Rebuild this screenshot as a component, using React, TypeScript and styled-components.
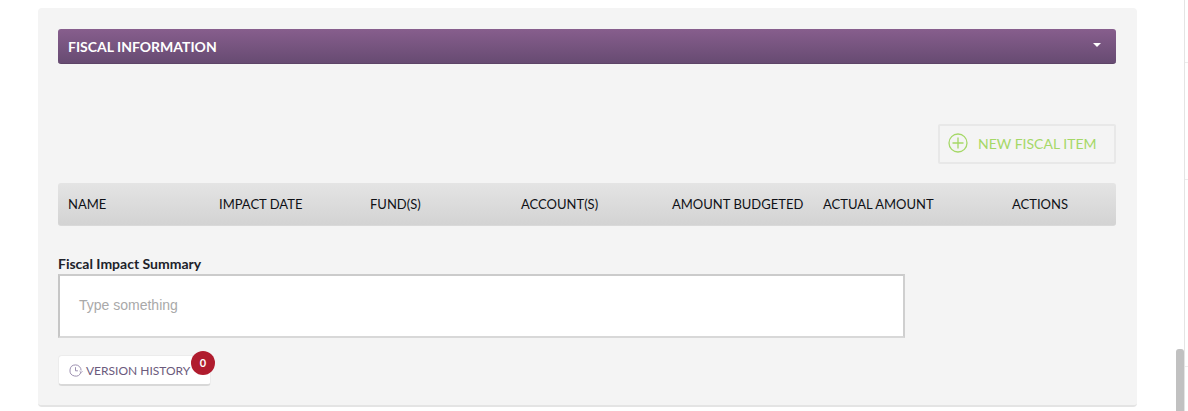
import { createGlobalStyle } from 'styled-components';
import styled from 'styled-components';

const GlobalStyle = createGlobalStyle`
  html, body {
    margin: 0;
    padding: 0;
    background: #ffffff;
    overflow: hidden;
  }
  body {
    font-family: Lato, "Liberation Sans", sans-serif;
  }
`;

const Page = styled.div`
  display: flex;
  width: 1188px;
  height: 411px;
  overflow: hidden;
`;

const Main = styled.main`
  width: 1176px;
  box-sizing: border-box;
  padding: 8px 39px 0 38px;
`;

const ScrollTrack = styled.div`
  width: 8px;
  height: 411px;
  padding-top: 349px;
  box-sizing: border-box;
  background: #ffffff;
`;

const ScrollThumb = styled.div`
  height: 62px;
  background: #c1c1c1;
  border-radius: 3px 3px 0 0;
`;

const SideSliver = styled.aside`
  width: 4px;
  height: 411px;
  box-sizing: border-box;
  border-left: 1px solid #e4e4e4;
  display: flex;
  flex-direction: column;
`;

const SideRow = styled.div<{ $height: number }>`
  height: ${(p) => p.$height}px;
  flex: none;
  box-sizing: border-box;
  border-bottom: 1px solid #ececec;
`;

const Panel = styled.section`
  height: 399px;
  box-sizing: border-box;
  padding: 21px 21px 0 20px;
  background: #f4f4f4;
  border-radius: 4px;
  border-bottom: 2px solid #e4e4e4;
`;

const SectionBar = styled.div`
  height: 35px;
  box-sizing: border-box;
  display: flex;
  align-items: center;
  justify-content: space-between;
  padding: 0 15px 0 10px;
  border-radius: 3px;
  background: linear-gradient(to bottom, #875e8d, #674b72);
  border-bottom: 1px solid #5d4467;
  color: #ffffff;
  font-size: 14px;
  font-weight: 700;
`;

const Caret = styled.span`
  width: 0;
  height: 0;
  margin-top: -2px;
  border-left: 4px solid transparent;
  border-right: 4px solid transparent;
  border-top: 4px solid #ffffff;
`;

const ActionRow = styled.div`
  display: flex;
  justify-content: flex-end;
  margin-top: 60px;
`;

const NewItemButton = styled.button`
  width: 178px;
  height: 40px;
  box-sizing: border-box;
  display: flex;
  align-items: center;
  gap: 10px;
  padding: 0 0 2px 8px;
  background: #f4f4f4;
  border: 2px solid #e8e8e8;
  border-radius: 2px;
  color: #a5d867;
  font-family: inherit;
  font-size: 14px;
`;

const TableHead = styled.div`
  display: grid;
  grid-template-columns: repeat(6, 151px) 152px;
  height: 43px;
  margin-top: 19px;
  align-items: center;
  border-radius: 3px;
  background: linear-gradient(to bottom, #e4e4e4, #d3d3d3);
  border-bottom: 1px solid #d9d9d9;
  box-sizing: border-box;
`;

const HeadCell = styled.div<{ $center?: boolean }>`
  padding-left: ${(p) => (p.$center ? 0 : 10)}px;
  text-align: ${(p) => (p.$center ? 'center' : 'left')};
  color: #0f1116;
  font-size: 13px;
  line-height: 15px;
  white-space: nowrap;
`;

const FieldLabel = styled.label`
  display: block;
  margin-top: 30px;
  height: 18px;
  line-height: 16px;
  color: #20222a;
  font-size: 14px;
  font-weight: 700;
`;

const SummaryBox = styled.div`
  width: 847px;
  height: 64px;
  box-sizing: border-box;
  padding: 20px 0 0 19px;
  background: #ffffff;
  border-style: solid;
  border-color: #cbcbcb #cfcfcf #d8d8d8 #c6c6c6;
  border-width: 2px;
  color: #a9a9a9;
  font-family: "Liberation Sans", Arial, sans-serif;
  font-size: 14px;
  line-height: 18px;
`;

const HistoryButton = styled.button`
  position: relative;
  width: 153px;
  height: 31px;
  margin-top: 17px;
  box-sizing: border-box;
  display: flex;
  align-items: center;
  gap: 3px;
  padding: 0 0 0 9px;
  background: #ffffff;
  border: 1px solid #ececec;
  border-bottom: 2px solid #d8d8d8;
  border-radius: 4px;
  color: #6b5a7c;
  font-family: inherit;
  font-size: 12px;
  white-space: nowrap;
`;

const CountBadge = styled.span`
  position: absolute;
  top: -5px;
  right: -5px;
  width: 24px;
  height: 24px;
  border-radius: 50%;
  background: #b01c2e;
  color: #ffffff;
  font-size: 11px;
  font-weight: 700;
  line-height: 24px;
  text-align: center;
`;

const columns = ['NAME', 'IMPACT DATE', 'FUND(S)', 'ACCOUNT(S)', 'AMOUNT BUDGETED', 'ACTUAL AMOUNT'];

function PlusCircle() {
  return (
    <svg width="20" height="20" viewBox="0 0 20 20" fill="none" stroke="#a5d867" strokeWidth="1.3">
      <circle cx="10" cy="10" r="9" />
      <path d="M10 4.5v11M4.5 10h11" />
    </svg>
  );
}

function HistoryClock() {
  return (
    <svg width="15" height="15" viewBox="0 0 15 15" fill="none" stroke="#9c8fb0" strokeWidth="1">
      <path d="M12.9 9.2A5.6 5.6 0 1 1 7.5 1.9a5.6 5.6 0 0 1 5.6 5.6" />
      <path d="M7.5 4.2v3.6h2.4M11.6 8.2l1.5 1.4 1.3-1.4" />
    </svg>
  );
}

export default function App() {
  return (
    <Page>
      <GlobalStyle />
      <Main>
        <Panel>
          <SectionBar>
            FISCAL INFORMATION
            <Caret />
          </SectionBar>
          <ActionRow>
            <NewItemButton>
              <PlusCircle />
              NEW FISCAL ITEM
            </NewItemButton>
          </ActionRow>
          <TableHead>
            {columns.map((name) => (
              <HeadCell key={name}>{name}</HeadCell>
            ))}
            <HeadCell $center>ACTIONS</HeadCell>
          </TableHead>
          <FieldLabel>Fiscal Impact Summary</FieldLabel>
          <SummaryBox>Type something</SummaryBox>
          <HistoryButton>
            <HistoryClock />
            VERSION HISTORY
            <CountBadge>0</CountBadge>
          </HistoryButton>
        </Panel>
      </Main>
      <ScrollTrack>
        <ScrollThumb />
      </ScrollTrack>
      <SideSliver>
        <SideRow $height={63} />
        <SideRow $height={117} />
        <SideRow $height={187} />
      </SideSliver>
    </Page>
  );
}
